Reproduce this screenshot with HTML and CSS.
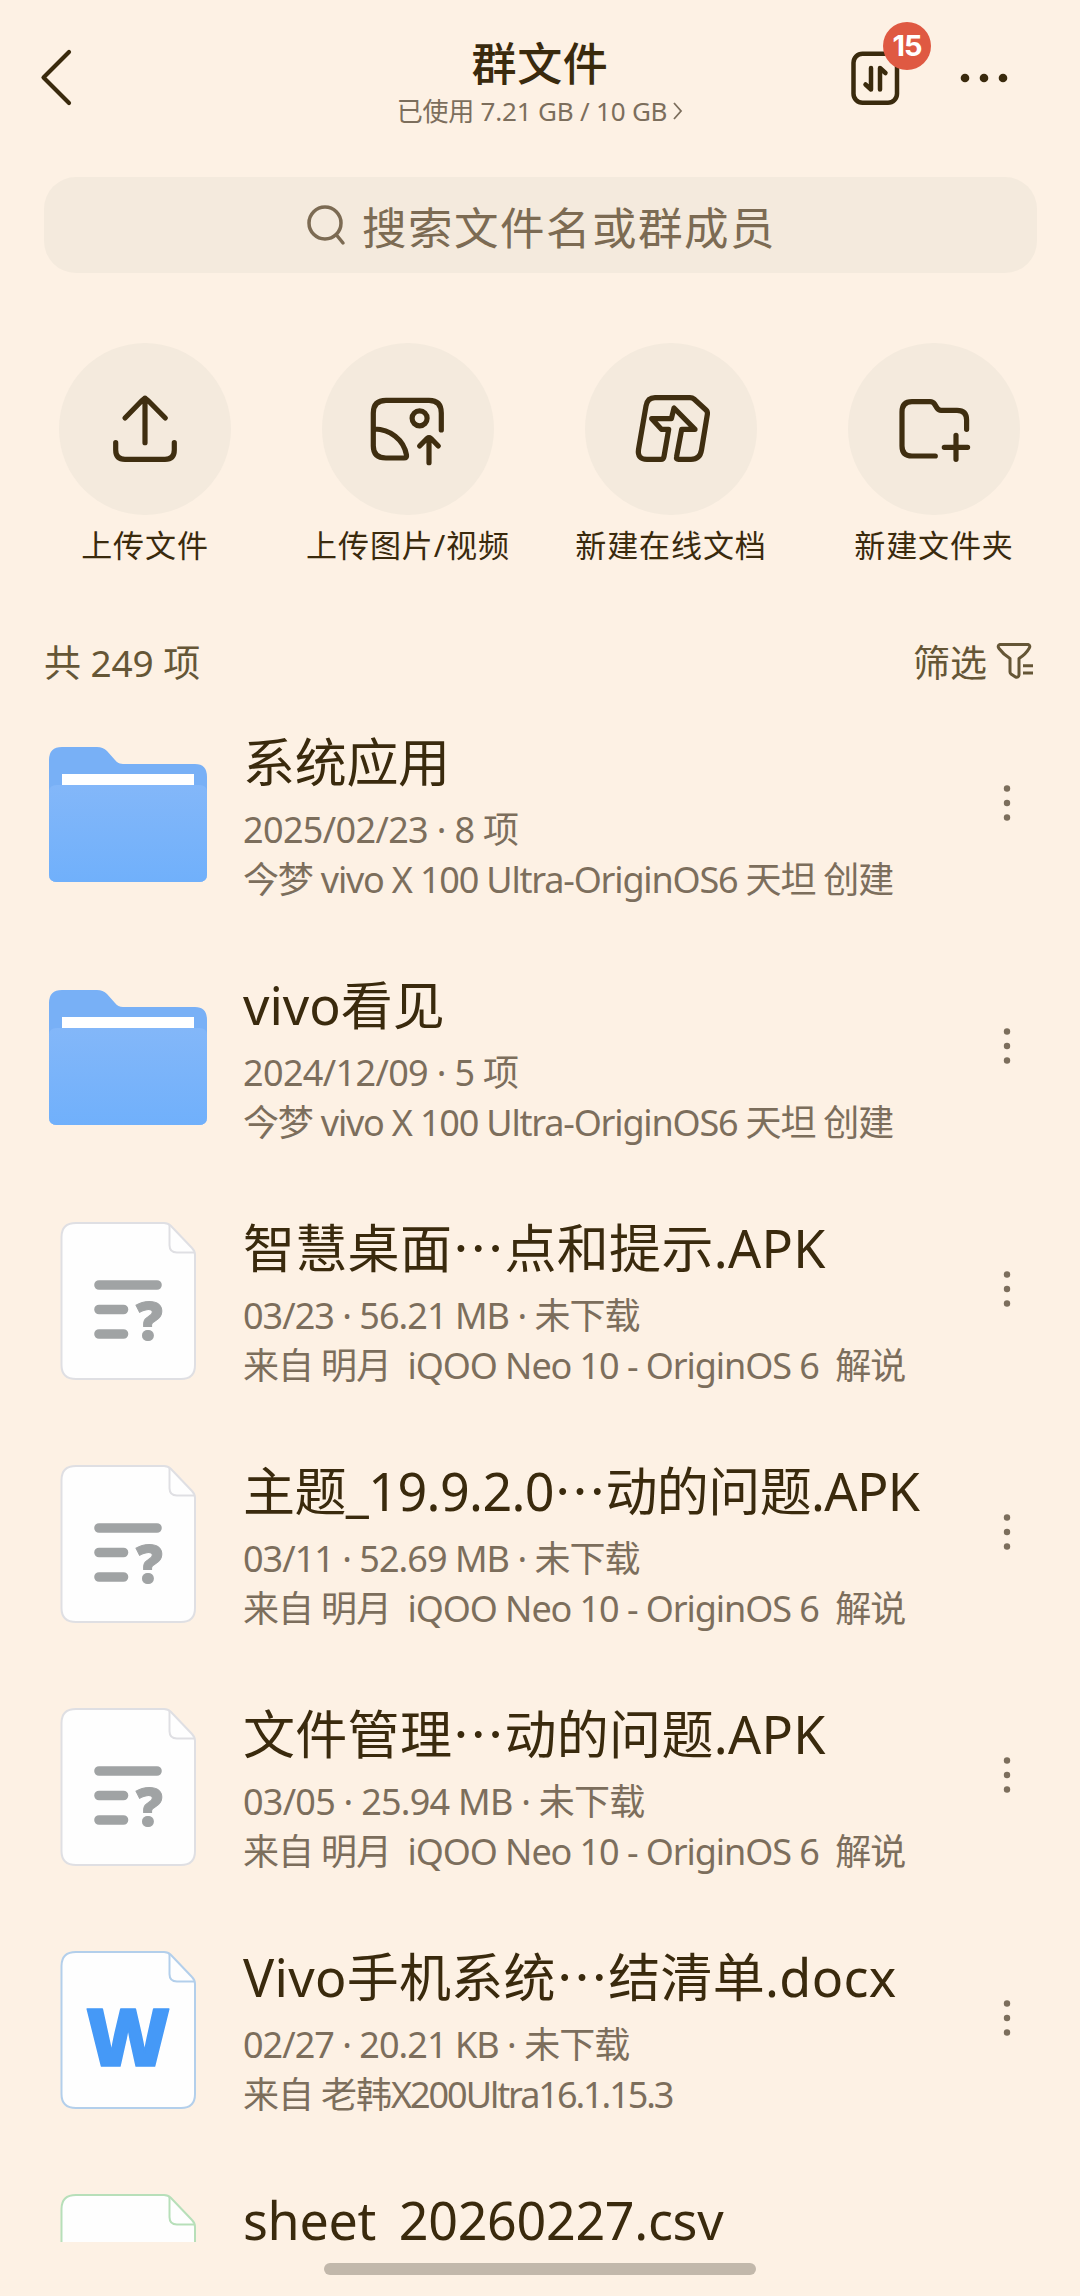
FILE: index.html
```html
<!DOCTYPE html>
<html lang="zh-CN">
<head>
<meta charset="utf-8">
<title>群文件</title>
<link rel="stylesheet" href="styles.css">
</head>
<body>
<svg class="defs" width="0" height="0" aria-hidden="true">
  <defs>
    <linearGradient id="folder-front" x1="0" y1="0" x2="0" y2="1"><stop offset="0" stop-color="#83b7f9"/><stop offset="1" stop-color="#70b0fb"/></linearGradient>
    <symbol id="folder" viewBox="0 0 158 158">
      <path fill="#78b0f6" d="M0 24Q0 11 13 11H48Q54 11 58 15L66 24Q69 28 74 28H146Q158 28 158 41V138Q158 146 150 146H8Q0 146 0 138Z"/>
      <path fill="url(#folder-front)" d="M0 56Q0 49 8 49H150Q158 49 158 56V138Q158 146 150 146H8Q0 146 0 138Z"/>
      <path fill="#fff" d="M13 38H145V49H13Z"/>
    </symbol>
    <symbol id="page" viewBox="0 0 158 158">
      <path fill="#fefefe" stroke="currentColor" stroke-width="2" d="M27 1H115Q119 1 122 4L143 26Q146 29 146 33V143Q146 157 132 157H27Q12.500 157 12.500 143V15Q12.500 1 27 1Z"/>
      <path fill="none" stroke="currentColor" stroke-width="2" d="M120.500 3V23Q120.500 30.500 128 30.500H145"/>
    </symbol>
    <symbol id="more" viewBox="0 0 8 36"><circle cx="4" cy="3.500" r="3.200"/><circle cx="4" cy="18" r="3.200"/><circle cx="4" cy="32.500" r="3.200"/></symbol>
  </defs>
</svg>
<header class="topbar">
  <svg class="back" width="40" height="60" viewBox="0 0 40 60"><path d="M31 5 L5.500 30.500 L31 56"/></svg>
  <div class="heading">
    <h1>群文件</h1>
    <p class="usage"><span>已使用 7.21 GB / 10 GB</span><svg width="10" height="18" viewBox="0 0 10 18"><path d="M1 1 L8 9 L1 17"/></svg></p>
  </div>
  <div class="tools">
    <div class="transfer">
      <svg width="50" height="56" viewBox="0 0 50 56"><rect x="3.500" y="3.700" width="43.500" height="49" rx="9"/><path d="M21 18V39.500L15.500 34.500M30 39.500V18L35.500 23"/></svg>
      <span class="badge">15</span>
    </div>
    <svg class="dots" width="48" height="10" viewBox="0 0 48 10"><circle cx="5" cy="5" r="4.300"/><circle cx="24" cy="5" r="4.300"/><circle cx="43" cy="5" r="4.300"/></svg>
  </div>
</header>
<div class="search">
  <svg width="42" height="44" viewBox="0 0 42 44"><circle cx="19" cy="20" r="16"/><path d="M30.500 32 L37 40"/></svg>
  <span>搜索文件名或群成员</span>
</div>
<nav class="actions">
  <div class="action"><svg viewBox="0 0 172 172"><path d="M86 99.700V55M66 75L83 57.500Q86 54.500 89 57.500L106.300 75M56.700 99.700V107Q56.700 116.300 66 116.300H106Q115.300 116.300 115.300 107V99.700"/></svg><span>上传文件</span></div>
  <div class="action"><svg viewBox="0 0 172 172"><path d="M119.300 87V70Q119.300 57.300 107 57.300H64Q51.300 57.300 51.300 70V103Q51.300 115 64 115H82Q85 115 84.500 112C82 97 68 85.500 51.300 86M107 119.700V95M97.600 103L105 95.500Q107 94 109 95.500L116.300 103"/><circle cx="97.600" cy="75.300" r="7.500"/></svg><span>上传图片/视频</span></div>
  <div class="action"><svg viewBox="0 0 172 172"><path d="M70 54.700H105Q107.500 54.700 109 56L121 67Q122.700 68.500 122.400 71L116.500 107Q115 116.300 106 116.300H93.500Q91 116.300 91.500 114L96.700 86.300H110L89 65L86.400 75.700H66.700L76.400 86.300H83.700L79 113.500Q78.500 116.300 76 116.300H62Q52 116.300 53.500 106.500L61 63Q62.500 54.700 70 54.700Z"/></svg><span>新建在线文档</span></div>
  <div class="action"><svg viewBox="0 0 172 172"><path d="M118.600 86.300V77Q118.600 67.300 109 67.300H93Q90.500 67.300 89 65L86.500 61Q85 58.700 82 58.700H64Q54 58.700 54 69V103Q54 113 64 113H87.300M108 92.300V116.300M96.300 104.300H119.600"/></svg><span>新建文件夹</span></div>
</nav>
<div class="summary">
  <span class="count">共 249 项</span>
  <div class="filter"><span>筛选</span><svg width="40" height="40" viewBox="0 0 40 40"><path d="M5 3.500H33Q36 4.500 34 7.500Q31 13 24 17.500V34Q23.500 37 20.500 36L16 33Q15 32 15 31V17.500Q8 13 4 7.500Q2 4.500 5 3.500ZM28 24.700H38M28 32H38"/></svg></div>
</div>
<main class="list">
  <div class="row"><svg class="icon"><use href="#folder"/></svg><div class="text"><h2 class="cjk">系统应用</h2><p class="date">2025/02/23 · 8 项</p><p class="creator">今梦 vivo X 100 Ultra-OriginOS6 天坦 创建</p></div><svg class="more"><use href="#more"/></svg></div>
  <div class="row"><svg class="icon"><use href="#folder"/></svg><div class="text"><h2>vivo看见</h2><p class="date">2024/12/09 · 5 项</p><p class="creator">今梦 vivo X 100 Ultra-OriginOS6 天坦 创建</p></div><svg class="more"><use href="#more"/></svg></div>
  <div class="row"><svg class="icon unknown" viewBox="0 0 158 158"><use href="#page"/><path class="lines" d="M50 63H108M50 87.500H74.500M50 112H74.500"/><text x="100.500" y="118" text-anchor="middle">?</text></svg><div class="text"><h2 class="wide">智慧桌面<span class="gap">…</span>点和提示.APK</h2><p class="meta">03/23 · 56.21 MB · 未下载</p><p class="from">来自 明月&nbsp; iQOO Neo 10 - OriginOS 6&nbsp; 解说</p></div><svg class="more"><use href="#more"/></svg></div>
  <div class="row"><svg class="icon unknown" viewBox="0 0 158 158"><use href="#page"/><path class="lines" d="M50 63H108M50 87.500H74.500M50 112H74.500"/><text x="100.500" y="118" text-anchor="middle">?</text></svg><div class="text"><h2 class="narrow">主题_19.9.2.0<span class="gap">…</span>动的问题.APK</h2><p class="meta">03/11 · 52.69 MB · 未下载</p><p class="from">来自 明月&nbsp; iQOO Neo 10 - OriginOS 6&nbsp; 解说</p></div><svg class="more"><use href="#more"/></svg></div>
  <div class="row"><svg class="icon unknown" viewBox="0 0 158 158"><use href="#page"/><path class="lines" d="M50 63H108M50 87.500H74.500M50 112H74.500"/><text x="100.500" y="118" text-anchor="middle">?</text></svg><div class="text"><h2 class="wide">文件管理<span class="gap">…</span>动的问题.APK</h2><p class="meta loose">03/05 · 25.94 MB · 未下载</p><p class="from">来自 明月&nbsp; iQOO Neo 10 - OriginOS 6&nbsp; 解说</p></div><svg class="more"><use href="#more"/></svg></div>
  <div class="row"><svg class="icon word" viewBox="0 0 158 158"><use href="#page"/><text x="79" y="115" text-anchor="middle" textLength="84" lengthAdjust="spacingAndGlyphs">W</text></svg><div class="text"><h2 class="wide">Vivo手机系统<span class="gap">…</span>结清单.docx</h2><p class="meta">02/27 · 20.21 KB · 未下载</p><p class="from">来自 老韩<span class="version">X200Ultra16.1.15.3</span></p></div><svg class="more"><use href="#more"/></svg></div>
  <div class="row"><svg class="icon sheet" viewBox="0 0 158 158"><use href="#page"/></svg><div class="text"><h2 class="filename">sheet_20260227.csv</h2></div></div>
</main>
<div class="home"></div>
</body>
</html>
```
FILE: styles.css
```css
* { box-sizing: border-box; margin: 0; padding: 0; }
body { width: 1080px; height: 2296px; overflow: hidden; background: #fdf1e4; color: #3a2a0d; font-family: "Noto Sans", "Noto Sans CJK SC", sans-serif; }
svg { display: block; flex: none; }
.defs { position: absolute; }
.topbar { display: grid; grid-template-columns: 300px 1fr 300px; height: 177px; }
.back { margin: 47px 0 0 38px; fill: none; stroke: #3a2a0d; stroke-width: 4.2; stroke-linecap: round; stroke-linejoin: round; }
.heading { display: flex; flex-direction: column; align-items: center; padding-top: 36px; }
h1 { font-size: 45px; line-height: 56px; font-weight: 500; letter-spacing: .7px; }
.usage { display: flex; align-items: center; gap: 6px; font-size: 26px; line-height: 38px; letter-spacing: -.2px; color: #7c6e5c; white-space: nowrap; }
.usage svg { fill: none; stroke: #7c6e5c; stroke-width: 1.8; }
.tools { display: flex; align-items: flex-start; padding: 50px 0 0 70px; gap: 60px; }
.transfer { position: relative; }
.transfer svg { fill: none; stroke: #3a2a0d; stroke-width: 4.5; stroke-linecap: round; stroke-linejoin: round; }
.badge { position: absolute; left: 33px; top: -28px; width: 48px; height: 48px; border-radius: 50%; background: #df5942; color: #fff; font: 700 29px/48px Inter, sans-serif; letter-spacing: -1px; text-align: center; }
.dots { margin-top: 23px; fill: #3a2a0d; }
.search { display: flex; align-items: center; justify-content: center; gap: 14px; width: 993px; height: 96px; margin: 0 auto; padding-left: 2px; border-radius: 32px; background: #f4eadd; color: #7c6b53; font-size: 44.5px; letter-spacing: 1.5px; }
.search svg { fill: none; stroke: #7c6b53; stroke-width: 3.5; stroke-linecap: round; }
.actions { display: grid; grid-template-columns: repeat(4, 263px); padding: 70px 0 0 13.5px; }
.action { display: flex; flex-direction: column; align-items: center; font-size: 31px; line-height: 44px; letter-spacing: .9px; gap: 8px; }
.action svg { width: 172px; height: 172px; border-radius: 50%; background: #f4eadd; fill: none; stroke: #3f2e10; stroke-width: 5.2; stroke-linecap: round; stroke-linejoin: round; }
.summary { display: flex; justify-content: space-between; align-items: center; height: 50px; margin-top: 69px; padding: 0 45px 0 44px; color: #655636; font-size: 37px; }
.count { letter-spacing: -.1px; }
.filter { display: flex; align-items: center; gap: 8px; }
.filter svg { fill: none; stroke: #655636; stroke-width: 3; stroke-linejoin: round; }
.list { height: 1522px; margin-top: 34px; overflow: hidden; }
.row { display: flex; align-items: flex-start; height: 243px; padding: 16px 69px 0 49px; }
.icon { width: 158px; height: 158px; }
.unknown { color: #dfdfe3; }
.word { color: #b3cfeb; }
.sheet { color: #b7dfb9; }
.lines { stroke: #a0a3a4; stroke-width: 9.6; stroke-linecap: round; }
.icon text { font-family: "Open Sans", sans-serif; font-weight: 800; }
.unknown text { font-size: 53px; fill: #a0a3a4; stroke: #a0a3a4; stroke-width: 1; }
.word text { font-size: 79px; fill: #4599f7; stroke: #4599f7; stroke-width: 1.5; stroke-linejoin: round; }
.text { flex: 1; margin: -4px 0 0 36px; white-space: nowrap; }
h2 { height: 60px; font-size: 52px; line-height: 60px; font-weight: 400; margin-bottom: 13px; }
p { font-size: 36px; line-height: 50px; }
.text p { color: #7c6e5c; }
.cjk { letter-spacing: -.3px; }
.wide { letter-spacing: .3px; }
.narrow { letter-spacing: -.6px; }
.filename { letter-spacing: -.3px; }
.date { letter-spacing: -.65px; }
.creator { letter-spacing: -1.19px; }
.meta { letter-spacing: -.97px; }
.meta.loose { letter-spacing: -.75px; }
.from { letter-spacing: -1.08px; }
.version { letter-spacing: -2.05px; }
.gap { font-family: "Noto Sans CJK SC", sans-serif; line-height: 1; }
.more { width: 8px; height: 36px; margin-top: 49px; fill: #7c6e5c; }
.home { width: 432px; height: 12px; margin: 21px auto 0; border-radius: 6px; background: #c2b8ab; }
```
